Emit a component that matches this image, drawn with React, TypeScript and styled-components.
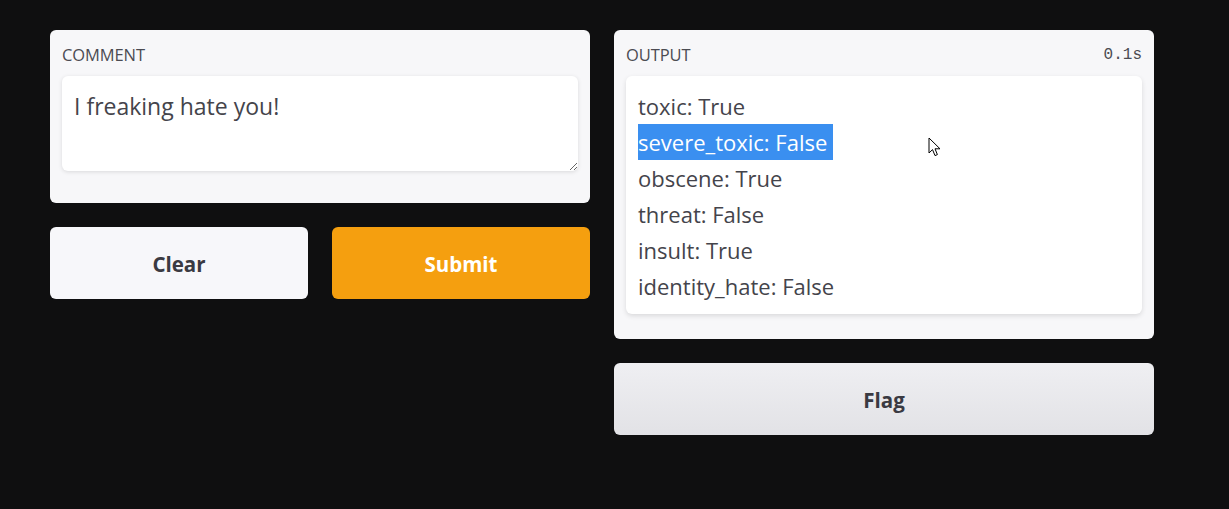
import React from 'react'
import styled, { createGlobalStyle } from 'styled-components'

const GlobalStyle = createGlobalStyle`
  html, body {
    margin: 0;
    padding: 0;
    background: #0f0f10;
  }
  body {
    font-family: "Open Sans", "Noto Sans", sans-serif;
  }
`

const Page = styled.div`
  width: 1229px;
  height: 509px;
  padding-top: 30px;
  box-sizing: border-box;
  background: #0f0f10;
  overflow: hidden;
`

const Columns = styled.div`
  display: grid;
  grid-template-columns: 540px 540px;
  column-gap: 24px;
  padding-left: 50px;
  align-items: start;
`

const Column = styled.div`
  display: flex;
  flex-direction: column;
  gap: 24px;
`

const Panel = styled.div<{ $bottom: number }>`
  background: #f7f7f9;
  border-radius: 6px;
  padding: 12px 12px ${p => p.$bottom}px;
  display: flex;
  flex-direction: column;
  gap: 10px;
`

const PanelHead = styled.div`
  display: flex;
  justify-content: space-between;
  align-items: center;
  height: 24px;
`

const Label = styled.span`
  font-size: 16.5px;
  color: #4b4b52;
  letter-spacing: -0.1px;
`

const Timer = styled.span`
  font-family: "Liberation Mono", "DejaVu Sans Mono", monospace;
  font-size: 16px;
  color: #4b4b52;
  padding-top: 2px;
`

const TextBox = styled.textarea`
  display: block;
  box-sizing: border-box;
  width: 100%;
  height: 95px;
  margin: 0;
  padding: 12px 12px 12px;
  border: none;
  border-radius: 6px;
  background: #fff;
  box-shadow: 0 1px 4px rgba(0, 0, 0, 0.12);
  font-family: "Open Sans", "Noto Sans", sans-serif;
  font-size: 23px;
  line-height: 36px;
  color: #44444b;
  outline: none;
`

const OutBox = styled.div`
  position: relative;
  background: #fff;
  border-radius: 6px;
  box-shadow: 0 2px 5px rgba(0, 0, 0, 0.12);
  padding: 12px 12px 10px;
`

const OutLine = styled.div`
  font-size: 22px;
  line-height: 36px;
  height: 36px;
  color: #44444b;
  white-space: pre;
`

const Selected = styled.span`
  display: inline-block;
  background: #3a8ff0;
  color: #fff;
`

const Pointer = styled.svg`
  position: absolute;
  left: 302px;
  top: 61px;
`

const ButtonRow = styled.div`
  display: grid;
  grid-template-columns: 1fr 1fr;
  gap: 24px;
`

const Button = styled.button<{ $variant: 'secondary' | 'primary' | 'flag' }>`
  height: 72px;
  border: none;
  border-radius: 6px;
  font-family: "Open Sans", "Noto Sans", sans-serif;
  font-size: 20.5px;
  font-weight: 700;
  cursor: pointer;
  padding: 2px 0 0;
  color: ${p => (p.$variant === 'primary' ? '#ffffff' : '#3a3a42')};
  background: ${p =>
    p.$variant === 'primary'
      ? '#f59f0f'
      : p.$variant === 'flag'
        ? 'linear-gradient(180deg, #efeff2 0%, #e2e2e6 100%)'
        : '#f7f7fa'};
`

const outputs: [string, string][] = [
  ['toxic', 'True'],
  ['severe_toxic', 'False'],
  ['obscene', 'True'],
  ['threat', 'False'],
  ['insult', 'True'],
  ['identity_hate', 'False'],
]

function App() {
  return (
    <Page>
      <GlobalStyle />
      <Columns>
        <Column>
          <Panel $bottom={32}>
            <PanelHead>
              <Label>COMMENT</Label>
            </PanelHead>
            <TextBox readOnly value="I freaking hate you!" />
          </Panel>
          <ButtonRow>
            <Button $variant="secondary">Clear</Button>
            <Button $variant="primary">Submit</Button>
          </ButtonRow>
        </Column>
        <Column>
          <Panel $bottom={25}>
            <PanelHead>
              <Label>OUTPUT</Label>
              <Timer>0.1s</Timer>
            </PanelHead>
            <OutBox>
              {outputs.map(([name, value]) =>
                name === 'severe_toxic' ? (
                  <OutLine key={name}>
                    <Selected>{`${name}: ${value} `}</Selected>
                  </OutLine>
                ) : (
                  <OutLine key={name}>{`${name}: ${value}`}</OutLine>
                )
              )}
              <Pointer width="14" height="21" viewBox="0 0 14 21">
                <path
                  d="M1 1 L1 16 L4.5 12.6 L7 18.6 L9.4 17.6 L7 11.8 L12 11.8 Z"
                  fill="#fff"
                  stroke="#000"
                  strokeWidth="1"
                  strokeLinejoin="round"
                />
              </Pointer>
            </OutBox>
          </Panel>
          <Button $variant="flag">Flag</Button>
        </Column>
      </Columns>
    </Page>
  )
}

export default App
